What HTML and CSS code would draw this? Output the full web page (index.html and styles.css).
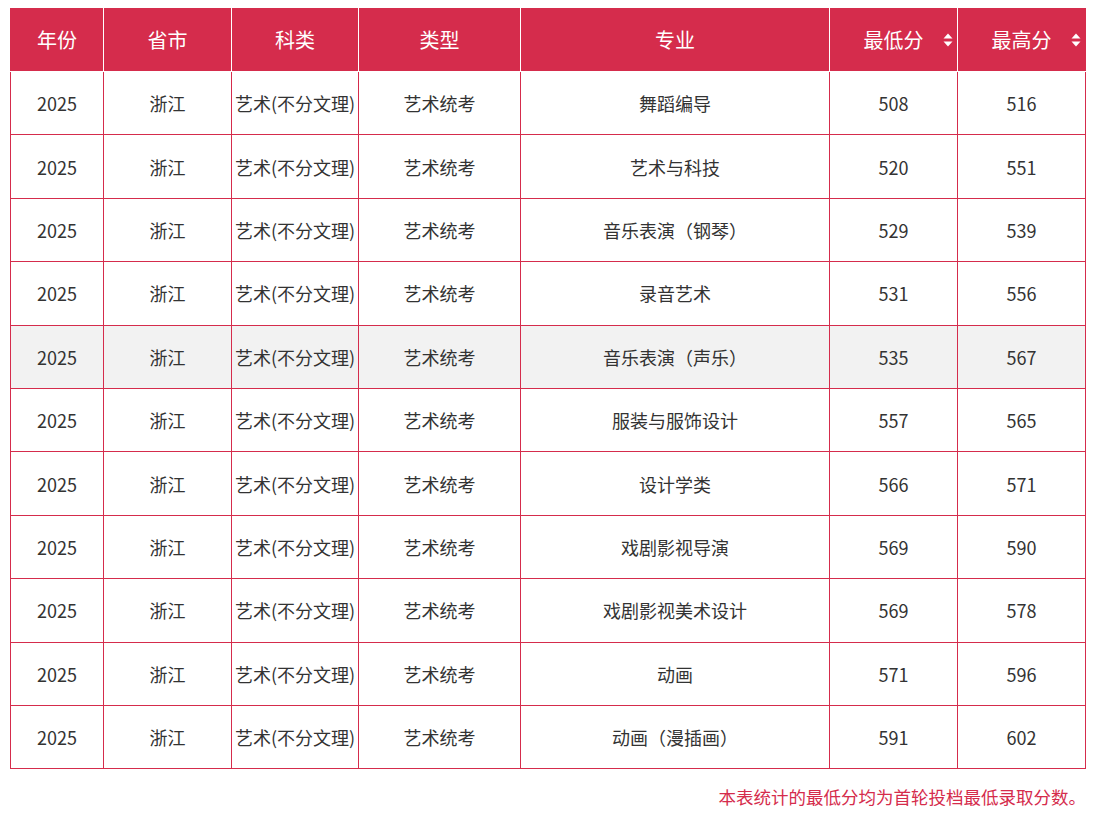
FILE: index.html
```html
<!DOCTYPE html>
<html lang="zh-CN">
<head>
<meta charset="utf-8">
<title>录取分数</title>
<link rel="stylesheet" href="styles.css">
</head>
<body>
<div class="wrap">
<table class="score">
  <colgroup>
    <col class="c1"><col class="c2"><col class="c3"><col class="c4"><col class="c5"><col class="c6"><col class="c7">
  </colgroup>
  <thead>
    <tr>
      <th>年份</th><th>省市</th><th>科类</th><th>类型</th><th>专业</th>
      <th class="sortable">最低分<span class="sort"><svg width="10" height="14" viewBox="0 0 10 14"><path d="M5 0.5 L9.5 5.5 L0.5 5.5 Z" fill="#fff"/><path d="M5 13.5 L9.5 8.5 L0.5 8.5 Z" fill="#fff"/></svg></span></th>
      <th class="sortable">最高分<span class="sort"><svg width="10" height="14" viewBox="0 0 10 14"><path d="M5 0.5 L9.5 5.5 L0.5 5.5 Z" fill="#fff"/><path d="M5 13.5 L9.5 8.5 L0.5 8.5 Z" fill="#fff"/></svg></span></th>
    </tr>
  </thead>
  <tbody>
    <tr><td>2025</td><td>浙江</td><td>艺术(不分文理)</td><td>艺术统考</td><td>舞蹈编导</td><td>508</td><td>516</td></tr>
    <tr><td>2025</td><td>浙江</td><td>艺术(不分文理)</td><td>艺术统考</td><td>艺术与科技</td><td>520</td><td>551</td></tr>
    <tr><td>2025</td><td>浙江</td><td>艺术(不分文理)</td><td>艺术统考</td><td>音乐表演（钢琴）</td><td>529</td><td>539</td></tr>
    <tr><td>2025</td><td>浙江</td><td>艺术(不分文理)</td><td>艺术统考</td><td>录音艺术</td><td>531</td><td>556</td></tr>
    <tr class="hover"><td>2025</td><td>浙江</td><td>艺术(不分文理)</td><td>艺术统考</td><td>音乐表演（声乐）</td><td>535</td><td>567</td></tr>
    <tr><td>2025</td><td>浙江</td><td>艺术(不分文理)</td><td>艺术统考</td><td>服装与服饰设计</td><td>557</td><td>565</td></tr>
    <tr><td>2025</td><td>浙江</td><td>艺术(不分文理)</td><td>艺术统考</td><td>设计学类</td><td>566</td><td>571</td></tr>
    <tr><td>2025</td><td>浙江</td><td>艺术(不分文理)</td><td>艺术统考</td><td>戏剧影视导演</td><td>569</td><td>590</td></tr>
    <tr><td>2025</td><td>浙江</td><td>艺术(不分文理)</td><td>艺术统考</td><td>戏剧影视美术设计</td><td>569</td><td>578</td></tr>
    <tr><td>2025</td><td>浙江</td><td>艺术(不分文理)</td><td>艺术统考</td><td>动画</td><td>571</td><td>596</td></tr>
    <tr><td>2025</td><td>浙江</td><td>艺术(不分文理)</td><td>艺术统考</td><td>动画（漫插画）</td><td>591</td><td>602</td></tr>
  </tbody>
</table>
<p class="note">本表统计的最低分均为首轮投档最低录取分数。</p>
</div>
</body>
</html>
```

FILE: styles.css
```css
html, body {
  margin: 0;
  padding: 0;
  background: #fff;
}
body {
  font-family: "Noto Sans CJK SC", "Noto Sans", sans-serif;
  color: #333;
}
.wrap {
  padding: 8px 18px 0 10px;
}
.score {
  width: 1075px;
  border-collapse: collapse;
  table-layout: fixed;
  font-size: 18px;
}
.c1 { width: 93px; }
.c2 { width: 128px; }
.c3 { width: 127px; }
.c4 { width: 162px; }
.c5 { width: 309px; }
.c6 { width: 128px; }
.c7 { width: 128px; }
.score th {
  background: #d52c4c;
  color: #fff;
  font-weight: normal;
  font-size: 20px;
  height: 63px;
  padding: 0;
  border-left: 1px solid #fff;
  border-right: 1px solid #fff;
  border-bottom: 1px solid #fff;
  text-align: center;
  position: relative;
}
.score th:first-child { border-left: 1px solid #d52c4c; }
.score th:last-child { border-right: 1px solid #d52c4c; }
.score td {
  border: 1px solid #d52c4c;
  text-align: center;
  height: 62.4px;
  padding: 0;
  white-space: nowrap;
}
.score tr.hover td {
  background: #f2f2f2;
}
.sort {
  position: absolute;
  right: 4px;
  top: 50%;
  margin-top: -7px;
  width: 10px;
  height: 14px;
  line-height: 0;
}
.note {
  margin: 15px 0 0 0;
  text-align: right;
  color: #d52c4c;
  font-size: 17.5px;
  line-height: 26px;
}
```
